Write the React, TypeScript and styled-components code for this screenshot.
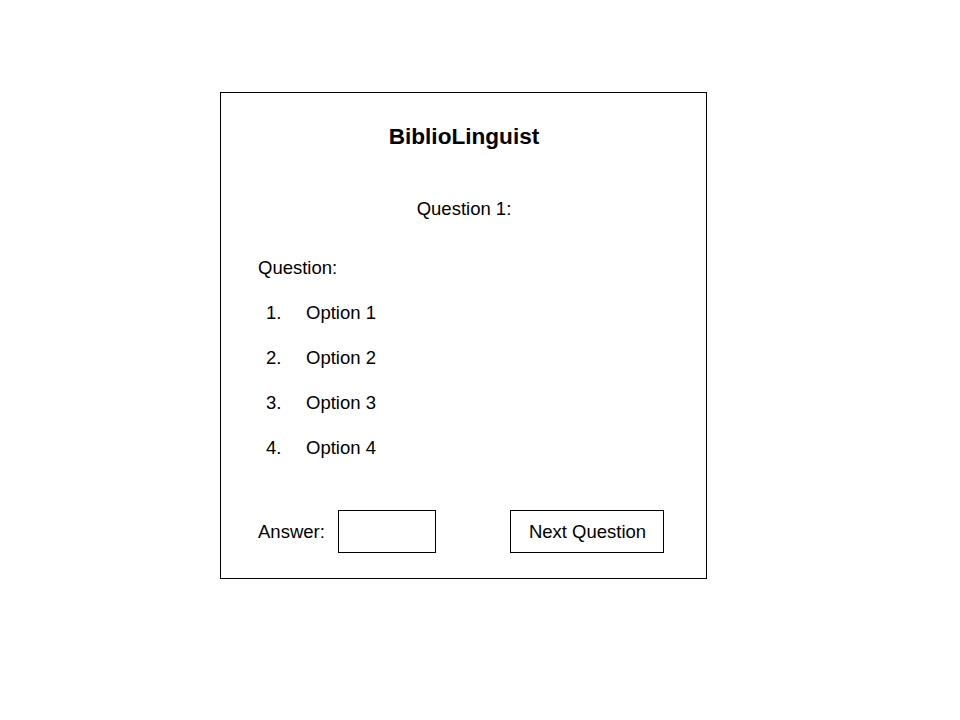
import React from 'react'
import styled, { createGlobalStyle } from 'styled-components'

const GlobalStyle = createGlobalStyle`
  body {
    margin: 0;
    background: #ffffff;
    font-family: "Liberation Sans", Arial, sans-serif;
    color: #000000;
  }
`

const Page = styled.div`
  padding: 92px 0 0 220px;
`

const Card = styled.div`
  width: 487px;
  height: 487px;
  box-sizing: border-box;
  border: 1px solid #000;
  padding: 30px 36px 25px 37px;
  display: flex;
  flex-direction: column;
`

const Title = styled.h1`
  margin: 0;
  font-size: 22.6px;
  line-height: 28px;
  font-weight: 700;
  text-align: center;
`

const QuestionNumber = styled.div`
  margin-top: 47px;
  font-size: 18.5px;
  line-height: 22px;
  text-align: center;
`

const Label = styled.div`
  margin-top: 37px;
  font-size: 18.5px;
  line-height: 22px;
`

const OptionList = styled.ol`
  list-style: none;
  margin: 23px 0 0 0;
  padding: 0;
  display: flex;
  flex-direction: column;
  gap: 23px;
`

const OptionItem = styled.li`
  display: flex;
  font-size: 18.5px;
  line-height: 22px;
`

const OptionIndex = styled.span`
  width: 48px;
  padding-left: 8px;
  box-sizing: border-box;
`

const AnswerRow = styled.div`
  margin-top: 51px;
  display: flex;
  align-items: center;
`

const AnswerLabel = styled.span`
  font-size: 18.5px;
  line-height: 22px;
  width: 80px;
`

const AnswerInput = styled.input`
  width: 98px;
  height: 43px;
  box-sizing: border-box;
  border: 1px solid #000;
  border-radius: 0;
  padding: 0 6px;
  font-family: inherit;
  font-size: 18.5px;
  outline: none;
`

const NextButton = styled.button`
  margin-left: 74px;
  width: 154px;
  height: 43px;
  box-sizing: border-box;
  border: 1px solid #000;
  border-radius: 0;
  background: #fff;
  color: #000;
  font-family: inherit;
  font-size: 18.5px;
  padding: 0 0 0 1px;
  cursor: pointer;
`

const options = ['Option 1', 'Option 2', 'Option 3', 'Option 4']

const App = () => {
  return (
    <>
      <GlobalStyle />
      <Page>
        <Card>
          <Title>BiblioLinguist</Title>
          <QuestionNumber>Question 1:</QuestionNumber>
          <Label>Question:</Label>
          <OptionList>
            {options.map((opt, i) => (
              <OptionItem key={opt}>
                <OptionIndex>{i + 1}.</OptionIndex>
                <span>{opt}</span>
              </OptionItem>
            ))}
          </OptionList>
          <AnswerRow>
            <AnswerLabel>Answer:</AnswerLabel>
            <AnswerInput type="text" />
            <NextButton>Next Question</NextButton>
          </AnswerRow>
        </Card>
      </Page>
    </>
  )
}

export default App
